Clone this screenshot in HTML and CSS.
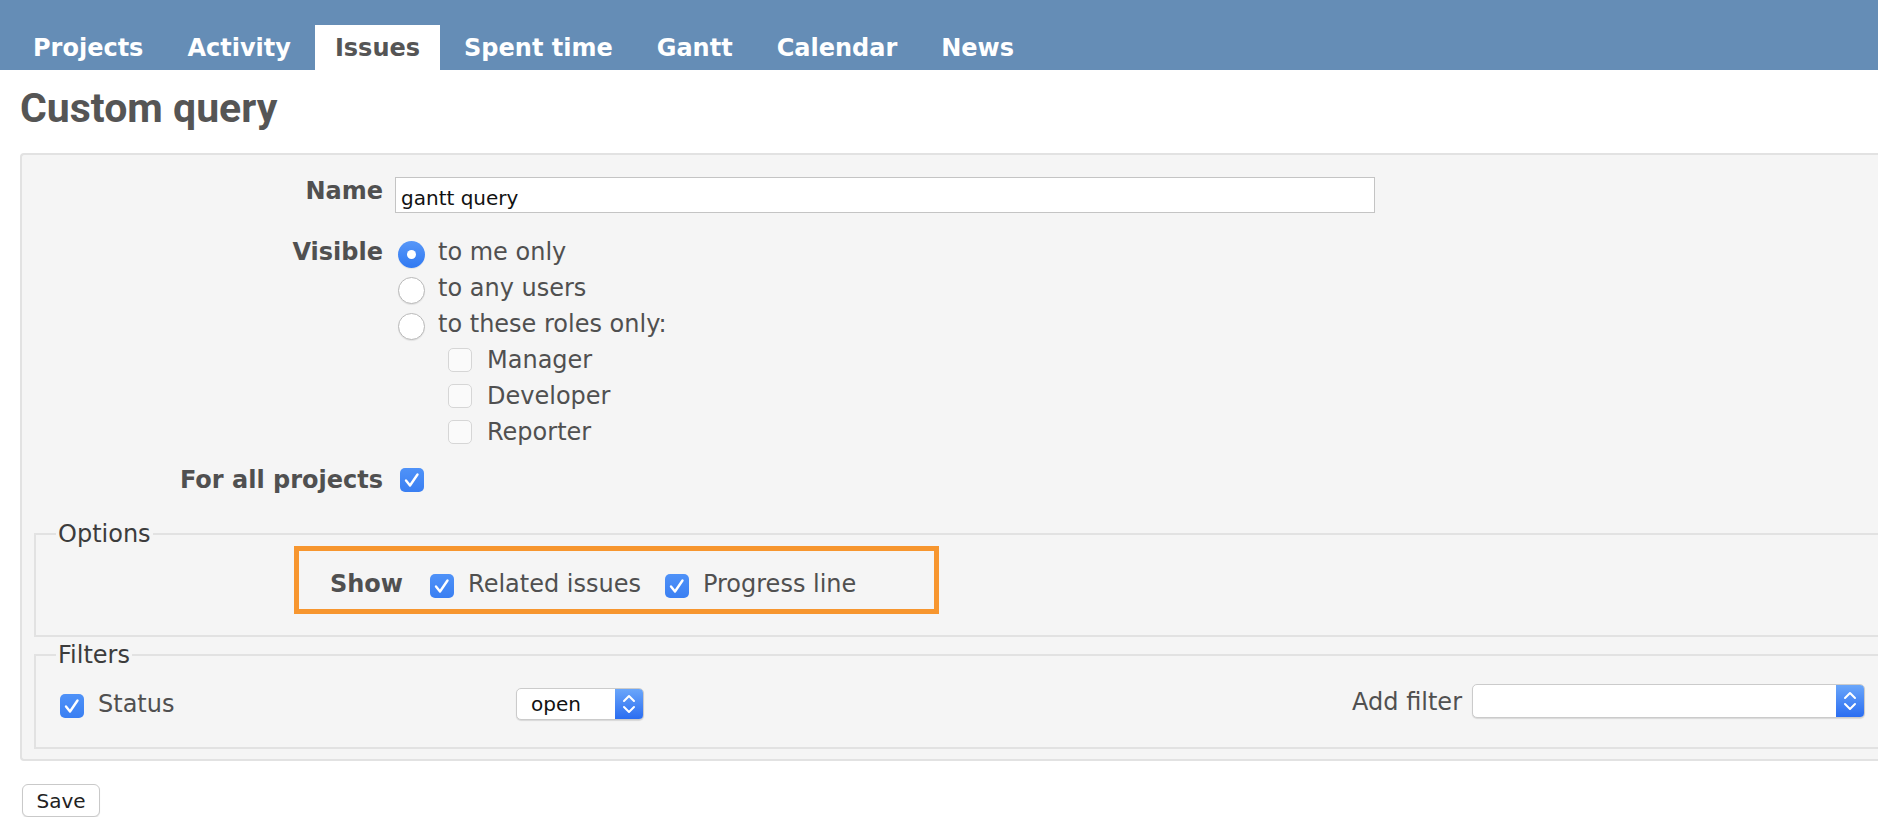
FILE: index.html
```html
<!DOCTYPE html>
<html lang="en">
<head>
<meta charset="utf-8">
<title>Custom query</title>
<link rel="stylesheet" href="styles.css">
</head>
<body>
<header class="topbar">
  <nav class="tabs">
    <a class="tab">Projects</a>
    <a class="tab">Activity</a>
    <a class="tab active">Issues</a>
    <a class="tab">Spent time</a>
    <a class="tab">Gantt</a>
    <a class="tab">Calendar</a>
    <a class="tab">News</a>
  </nav>
</header>

<main class="content">
  <h2 class="title">Custom query</h2>

  <form class="box">
    <div class="frow row-name">
      <label class="lbl lbl-name">Name</label>
      <div class="field"><input class="text-input" type="text" value="gantt query"></div>
    </div>

    <div class="frow row-visible">
      <label class="lbl">Visible</label>
      <div class="field">
        <div class="opt"><span class="radio on"><span class="dot"></span></span><span class="otext">to me only</span></div>
        <div class="opt"><span class="radio"></span><span class="otext">to any users</span></div>
        <div class="opt"><span class="radio"></span><span class="otext">to these roles only:</span></div>
        <div class="opt role"><span class="cb off"></span><span class="otext">Manager</span></div>
        <div class="opt role"><span class="cb off"></span><span class="otext">Developer</span></div>
        <div class="opt role"><span class="cb off"></span><span class="otext">Reporter</span></div>
      </div>
    </div>

    <div class="frow row-all">
      <label class="lbl">For all projects</label>
      <div class="field">
        <div class="opt"><span class="cb on cb-all"><svg viewBox="0 0 24 24" width="24" height="24"><path d="M6 12.5 L10 17.5 L17.5 6.5" fill="none" stroke="#fff" stroke-width="2.4" stroke-linecap="round" stroke-linejoin="round"/></svg></span></div>
      </div>
    </div>

    <fieldset class="fs fs-options">
      <legend>Options</legend>
      <div class="highlight">
        <div class="show-row">
          <span class="show-lbl">Show</span>
          <span class="cb on shift"><svg viewBox="0 0 24 24" width="24" height="24"><path d="M6 12.5 L10 17.5 L17.5 6.5" fill="none" stroke="#fff" stroke-width="2.4" stroke-linecap="round" stroke-linejoin="round"/></svg></span>
          <span class="otext show-item">Related issues</span>
          <span class="cb on shift"><svg viewBox="0 0 24 24" width="24" height="24"><path d="M6 12.5 L10 17.5 L17.5 6.5" fill="none" stroke="#fff" stroke-width="2.4" stroke-linecap="round" stroke-linejoin="round"/></svg></span>
          <span class="otext">Progress line</span>
        </div>
      </div>
    </fieldset>

    <fieldset class="fs fs-filters">
      <legend>Filters</legend>
      <div class="filter-row">
        <div class="filter-cell">
          <span class="cb on shift status-cb"><svg viewBox="0 0 24 24" width="24" height="24"><path d="M6 12.5 L10 17.5 L17.5 6.5" fill="none" stroke="#fff" stroke-width="2.4" stroke-linecap="round" stroke-linejoin="round"/></svg></span>
          <span class="otext">Status</span>
        </div>
        <span class="sel sel-open">
          <span class="sel-text">open</span>
          <span class="sel-btn"><svg viewBox="0 0 28 32" width="28" height="32"><path d="M9 13 L14 8 L19 13 M9 19 L14 24 L19 19" fill="none" stroke="#fff" stroke-width="2" stroke-linecap="round" stroke-linejoin="round"/></svg></span>
        </span>
        <span class="spacer"></span>
        <span class="add-lbl">Add filter</span>
        <span class="sel sel-add">
          <span class="sel-text"></span>
          <span class="sel-btn"><svg viewBox="0 0 28 34" width="28" height="34"><path d="M9 14 L14 9 L19 14 M9 20 L14 25 L19 20" fill="none" stroke="#fff" stroke-width="2" stroke-linecap="round" stroke-linejoin="round"/></svg></span>
        </span>
      </div>
    </fieldset>
  </form>

  <button class="save" type="button">Save</button>
</main>
</body>
</html>
```

FILE: styles.css
```css
html, body {
  margin: 0;
  padding: 0;
  overflow: hidden;
  background: #fff;
}

body {
  font-family: "DejaVu Sans", Verdana, sans-serif;
  font-size: 24px;
  color: #505050;
}

/* ---------- top menu ---------- */
.topbar {
  height: 70px;
  background: #658db6;
}

.tabs {
  height: 70px;
  display: flex;
  align-items: flex-end;
  padding-left: 13px;
}

.tab {
  display: block;
  padding: 9px 20px 8px;
  line-height: 28px;
  margin-right: 4px;
  font-weight: bold;
  color: #fff;
  text-decoration: none;
}

.tab.active {
  background: #fff;
  color: #555;
}

/* ---------- content ---------- */
.content {
  padding-left: 20px;
}

.title {
  margin: 14px 0 21px;
  font-family: Roboto, "Liberation Sans", sans-serif;
  font-weight: 700;
  font-size: 41px;
  line-height: 48px;
  color: #555;
}

.box {
  display: block;
  margin: 0;
  background: #f5f5f5;
  border: 2px solid #e2e2e2;
  border-right: none;
  border-radius: 4px 0 0 4px;
  padding: 22px 0 10px 0;
}

.frow {
  display: grid;
  grid-template-columns: 361px 1fr;
  column-gap: 12px;
  align-items: start;
}

.row-visible { margin-top: 21px; }
.row-all { margin-top: 12px; }

.lbl {
  text-align: right;
  font-weight: bold;
  line-height: 36px;
  color: #505050;
}

.lbl-name { line-height: 28px; }

.text-input {
  box-sizing: border-box;
  width: 980px;
  height: 36px;
  margin: 0;
  padding: 6px 5px 0;
  border: 1px solid #c4c4c4;
  background: #fff;
  font-family: "DejaVu Sans", Verdana, sans-serif;
  font-size: 20px;
  color: #111;
  outline: none;
}

.opt {
  display: flex;
  align-items: center;
  height: 36px;
}

.otext {
  line-height: 36px;
  color: #505050;
}

.radio {
  box-sizing: border-box;
  width: 27px;
  height: 27px;
  margin: 4px 13px 0 3px;
  border-radius: 50%;
  background: #fff;
  border: 1px solid #b9b9b9;
  box-shadow: 0 1px 1px rgba(0, 0, 0, 0.08);
  display: flex;
  align-items: center;
  justify-content: center;
}

.radio.on {
  border: none;
  background: linear-gradient(#5797f8, #3079f2);
}

.radio .dot {
  width: 9px;
  height: 9px;
  border-radius: 50%;
  background: #fff;
}

.cb {
  box-sizing: border-box;
  width: 24px;
  height: 24px;
  border-radius: 5px;
  flex: none;
  display: block;
}

.cb svg { display: block; }

.cb.on {
  background: linear-gradient(#4f92f8, #3a7ff2);
}

.cb.off {
  background: #fafafa;
  border: 1px solid #d6d6d6;
}

.role .cb {
  margin: 0 15px 0 53px;
}

.cb-all {
  margin-left: 5px;
}

.cb.shift {
  margin-top: 4px;
}

/* ---------- fieldsets ---------- */
.fs {
  margin: 22px 0 0 12px;
  padding: 0 13px 21px 20px;
  border: 2px solid #e2e2e2;
  border-right: none;
  min-width: 0;
}

.fs legend {
  padding: 0 2px;
  line-height: 28px;
  color: #3c3c3c;
}

.fs-filters {
  margin-top: 4px;
  padding-bottom: 25px;
}

.highlight {
  box-sizing: border-box;
  width: 645px;
  margin: -2px 0 0 238px;
  border: 5px solid #f7962f;
  padding: 15px 0 7px 31px;
}

.show-row {
  display: flex;
  align-items: center;
  height: 36px;
}

.show-lbl {
  font-weight: bold;
  line-height: 36px;
  margin-right: 27px;
  color: #505050;
}

.show-row .cb { margin-right: 14px; }
.show-item { margin-right: 24px; }

/* ---------- filters row ---------- */
.filter-row {
  display: flex;
  align-items: center;
  height: 36px;
  margin-top: 17px;
}

.filter-cell {
  width: 460px;
  display: flex;
  align-items: center;
  height: 36px;
}

.status-cb {
  margin-left: 4px;
  margin-right: 14px;
}

.spacer { flex: 1; }

.add-lbl {
  line-height: 36px;
  margin: 0 10px 4px 0;
  color: #505050;
}

.sel {
  box-sizing: border-box;
  display: flex;
  background: #fff;
  border: 1px solid #cbcbcb;
  border-radius: 5px;
  box-shadow: 0 1px 1px rgba(0, 0, 0, 0.12);
  overflow: hidden;
}

.sel-open {
  width: 128px;
  height: 32px;
}

.sel-add {
  width: 393px;
  height: 34px;
  margin-bottom: 6px;
}

.sel-text {
  flex: 1;
  padding-left: 14px;
  font-size: 20px;
  line-height: 30px;
  color: #111;
}

.sel-btn {
  width: 28px;
  flex: none;
  background: linear-gradient(#6aa6fa, #2a6df1);
  display: flex;
  align-items: center;
  justify-content: center;
}

.sel-btn svg { display: block; }

/* ---------- save ---------- */
.save {
  display: block;
  margin: 23px 0 0 2px;
  box-sizing: border-box;
  width: 78px;
  height: 33px;
  padding: 2px 0 0;
  border: 1px solid #c9c9c9;
  border-radius: 6px;
  background: #fff;
  box-shadow: 0 1px 1px rgba(0, 0, 0, 0.1);
  font-family: "DejaVu Sans", Verdana, sans-serif;
  font-size: 20px;
  line-height: 23px;
  color: #222;
}
```
